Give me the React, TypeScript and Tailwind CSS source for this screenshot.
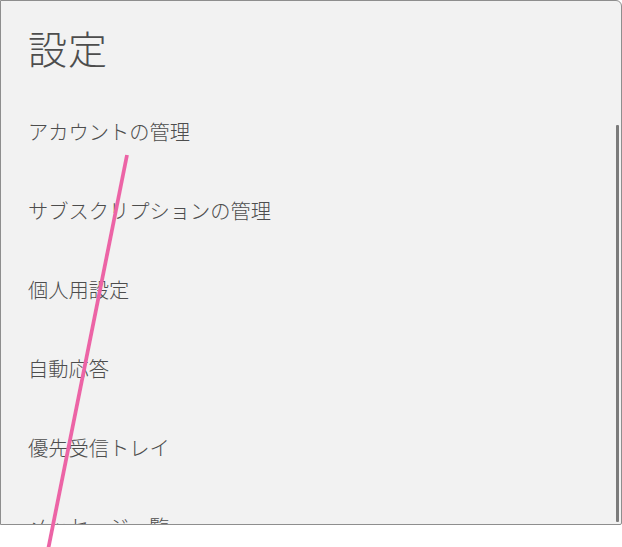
import React from 'react';

const items = [
  'アカウントの管理',
  'サブスクリプションの管理',
  '個人用設定',
  '自動応答',
  '優先受信トレイ',
  'メッセージ一覧',
];

export default function App() {
  return (
    <div className="relative w-[622px] h-[547px] bg-white" style={{ fontFamily: '"Noto Sans CJK JP", "Noto Sans", sans-serif' }}>
      <div className="w-[622px] h-[525px] flex border border-[#8e8e8e] rounded-tr-[6px] rounded-br-[2px] bg-[#f2f2f2] overflow-hidden">
        <div className="flex-1 flex flex-col pl-[27px]">
          {/* Header */}
          <div className="h-[92px] shrink-0 flex items-center">
            <h1 className="text-[39px] leading-none font-light text-[#4d4d4d] tracking-[1px]">設定</h1>
          </div>
          {/* Menu list */}
          <ul className="flex flex-col">
            {items.map((label) => (
              <li key={label} className="h-[79px] shrink-0 flex items-center text-[20.25px] font-light text-[#4d4d4d]">
                {label}
              </li>
            ))}
          </ul>
        </div>
        {/* Scrollbar */}
        <div className="w-[5px] pt-[124px] pb-[2px] pr-[1px] shrink-0">
          <div className="h-full w-[3px] bg-[#7b7b7b] rounded-[1px]" />
        </div>
      </div>

      {/* Annotation line */}
      <svg className="absolute left-0 top-0 pointer-events-none" width="622" height="547">
        <line x1="127" y1="155" x2="48" y2="550" stroke="#ec64a6" strokeWidth="3.75" strokeLinecap="butt" />
      </svg>
    </div>
  );
}
